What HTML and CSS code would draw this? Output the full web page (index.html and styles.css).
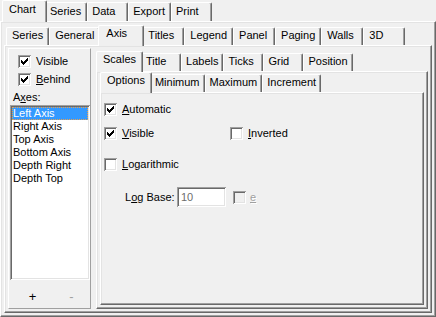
FILE: index.html
```html
<!DOCTYPE html>
<html lang="en">
<head>
    <meta charset="UTF-8">
    <title>Chart editor - Axis</title>
    <link rel="stylesheet" href="styles.css">
</head>
<body>
<div class="dlg">
    <div class="tabs top">
        <span class="tab on">Chart</span><span class="tab">Series</span><span class="tab">Data</span><span class="tab">Export</span><span class="tab">Print</span>
    </div>
    <div class="page p1">
        <div class="tabs sm wide">
            <span class="tab">Series</span><span class="tab">General</span><span class="tab on">Axis</span><span class="tab">Titles</span><span class="tab">Legend</span><span class="tab">Panel</span><span class="tab">Paging</span><span class="tab">Walls</span><span class="tab">3D</span>
        </div>
        <div class="page p2">
            <div class="side">
                <div class="check"><span class="chk"><svg width="13" height="13" viewBox="0 0 13 13"><path d="M3 5h1v1h1v1h1v-1h1v-1h1v-1h1v-1h1v3h-1v1h-1v1h-1v1h-1v1h-1v-1h-1v-1h-1z"/></svg></span><span>Visible</span></div>
                <div class="check"><span class="chk"><svg width="13" height="13" viewBox="0 0 13 13"><path d="M3 5h1v1h1v1h1v-1h1v-1h1v-1h1v-1h1v3h-1v1h-1v1h-1v1h-1v1h-1v-1h-1v-1h-1z"/></svg></span><span><u>B</u>ehind</span></div>
                <div class="cap">A<u>x</u>es:</div>
                <ul class="list">
                    <li class="sel">Left Axis</li>
                    <li>Right Axis</li>
                    <li>Top Axis</li>
                    <li>Bottom Axis</li>
                    <li>Depth Right</li>
                    <li>Depth Top</li>
                </ul>
                <div class="btns">
                    <span class="btn">+</span>
                    <span class="btn dim">-</span>
                </div>
            </div>
            <div class="main">
                <div class="tabs sm narrow">
                    <span class="tab on">Scales</span><span class="tab">Title</span><span class="tab">Labels</span><span class="tab">Ticks</span><span class="tab">Grid</span><span class="tab">Position</span>
                </div>
                <div class="page p3">
                    <div class="tabs sm narrow">
                        <span class="tab on">Options</span><span class="tab">Minimum</span><span class="tab">Maximum</span><span class="tab">Increment</span>
                    </div>
                    <div class="page p4">
                        <div class="check"><span class="chk"><svg width="13" height="13" viewBox="0 0 13 13"><path d="M3 5h1v1h1v1h1v-1h1v-1h1v-1h1v-1h1v3h-1v1h-1v1h-1v1h-1v1h-1v-1h-1v-1h-1z"/></svg></span><span><u>A</u>utomatic</span></div>
                        <div class="pair">
                            <div class="check col"><span class="chk"><svg width="13" height="13" viewBox="0 0 13 13"><path d="M3 5h1v1h1v1h1v-1h1v-1h1v-1h1v-1h1v3h-1v1h-1v1h-1v1h-1v1h-1v-1h-1v-1h-1z"/></svg></span><span><u>V</u>isible</span></div>
                            <div class="check"><span class="chk"></span><span><u>I</u>nverted</span></div>
                        </div>
                        <div class="check log"><span class="chk"></span><span><u>L</u>ogarithmic</span></div>
                        <div class="base">
                            <span class="base-label">L<u>o</u>g Base:</span>
                            <span class="edit">10</span>
                            <span class="chk off"></span>
                            <span class="dis"><u>e</u></span>
                        </div>
                    </div>
                </div>
            </div>
        </div>
    </div>
</div>
</body>
</html>
```

FILE: styles.css
```css
body {
    margin: 0;
    background: #f0f0f0;
    font: 11px "Liberation Sans", Arial, sans-serif;
    color: #000;
}

.dlg {
    width: 436px;
    height: 317px;
    display: flex;
    flex-direction: column;
}

/* tab strips */
.tabs {
    display: flex;
    align-items: flex-end;
    flex: none;
    height: 21px;
    padding-left: 2px;
}

.tabs.top {
    padding-left: 4px;
}

.tab {
    box-sizing: border-box;
    height: 19px;
    min-width: 41px;
    padding: 2px 4px 0;
    line-height: 13px;
    white-space: nowrap;
    border: 1px solid #fff;
    border-right-color: #696969;
    border-bottom: 0;
    border-radius: 2px 2px 0 0;
    box-shadow: inset -1px 0 #a0a0a0;
}

.top .tab {
    padding-right: 5px;
}

.tab.on {
    height: 22px;
    min-width: 45px;
    margin: 0 -2px -1px;
    padding: 2px 6px 0;
    background: #f0f0f0;
    position: relative;
    z-index: 1;
}

.tabs.sm {
    height: 20px;
}

.sm .tab {
    height: 18px;
    padding-top: 1px;
}

.sm .tab.on {
    height: 21px;
}

.wide .tab {
    min-width: 42px;
    padding-left: 5px;
    padding-right: 5px;
}

.wide .tab.on {
    min-width: 46px;
    padding-left: 7px;
}

.narrow .tab {
    min-width: 40px;
}

.narrow .tab.on {
    min-width: 44px;
}

/* raised pages */
.page {
    flex: 1;
    display: flex;
    flex-direction: column;
    border: 1px solid;
    border-color: #fff #696969 #696969 #fff;
    box-shadow: inset -1px -1px #a0a0a0, inset 1px 1px #e3e3e3;
}

.p1 {
    padding: 3px 3px 3px;
}

.p2 {
    flex-direction: row;
    gap: 5px;
    padding: 2px 3px 3px;
}

.p3 {
    padding: 0 3px 3px;
}

.p4 {
    padding: 10px 3px 3px;
}

.main {
    flex: 1;
    display: flex;
    flex-direction: column;
    padding-top: 3px;
}

/* left side panel */
.side {
    box-sizing: border-box;
    width: 83px;
    display: flex;
    flex-direction: column;
    padding: 6px 0 0 9px;
    border: 1px solid;
    border-color: #fff #a0a0a0 #a0a0a0 #fff;
}

.side .check {
    height: 18px;
    align-items: flex-start;
}

.cap {
    margin-left: -5px;
    line-height: 13px;
}

.list {
    box-sizing: border-box;
    margin: 1px 0 0 -8px;
    padding: 2px;
    height: 175px;
    list-style: none;
    background: #fff;
    box-shadow: inset 1px 1px #a0a0a0, inset -1px -1px #fff, inset 2px 2px #696969, inset -2px -2px #e3e3e3;
}

.list li {
    height: 13px;
    line-height: 13px;
    padding-left: 1px;
}

.list li.sel {
    background: #3399ff;
    color: #fff;
    outline: 1px dotted #e8a050;
    outline-offset: -1px;
}

.btns {
    flex: 1;
    display: flex;
    align-items: center;
    gap: 14px;
    padding: 4px 0 0 11px;
    margin-left: -9px;
}

.btn {
    width: 25px;
    text-align: center;
    font-size: 13px;
}

.btn.dim {
    color: #a0a0a0;
}

/* check boxes */
.check {
    display: flex;
    align-items: center;
    gap: 5px;
    line-height: 13px;
}

.chk {
    display: flex;
    flex: none;
    width: 13px;
    height: 13px;
    background: #fff;
    box-shadow: inset 1px 1px #a0a0a0, inset -1px -1px #fff, inset 2px 2px #696969, inset -2px -2px #e3e3e3;
}

.chk.off {
    background: #f0f0f0;
}

.pair {
    display: flex;
    margin-top: 11px;
}

.pair .col {
    width: 126px;
}

.log {
    margin-top: 18px;
}

.base {
    display: flex;
    align-items: center;
    margin-top: 16px;
    padding-left: 21px;
}

.base-label {
    width: 52px;
}

.edit {
    box-sizing: border-box;
    width: 49px;
    height: 20px;
    padding-left: 4px;
    line-height: 20px;
    color: #6d6d6d;
    background: #fff;
    box-shadow: inset 1px 1px #a0a0a0, inset -1px -1px #fff, inset 2px 2px #696969, inset -2px -2px #e3e3e3;
    margin-right: 7px;
}

.dis {
    margin-left: 4px;
    color: #a0a0a0;
    text-shadow: 1px 1px #fff;
}
```
